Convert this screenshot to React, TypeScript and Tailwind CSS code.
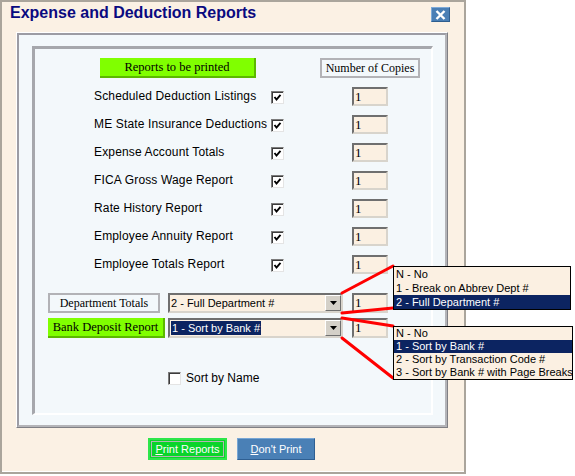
import React from 'react'

const reports = [
  'Scheduled Deduction Listings',
  'ME State Insurance Deductions',
  'Expense Account Totals',
  'FICA Gross Wage Report',
  'Rate History Report',
  'Employee Annuity Report',
  'Employee Totals Report',
]

function Check({ checked }: { checked?: boolean }) {
  return (
    <div className="w-[13px] h-[13px] shrink-0 bg-white border border-t-[#7b7b7b] border-l-[#7b7b7b] border-r-[#e4e4e4] border-b-[#e4e4e4] shadow-[inset_1px_1px_0_#3c3c3c] flex items-center justify-center">
      {checked && (
        <svg width="9" height="9" viewBox="0 0 9 9">
          <path d="M1.5 4 L3.5 6.5 L7.5 1.8" fill="none" stroke="#000" strokeWidth="1.9" />
        </svg>
      )}
    </div>
  )
}

function Copies({ className }: { className: string }) {
  return (
    <div className={`w-[36px] shrink-0 bg-[#fbf0e2] border-2 border-t-[#6f6f6f] border-l-[#6f6f6f] border-r-[#d8d4cc] border-b-[#d8d4cc] pl-[1px] font-['Liberation_Serif','Times_New_Roman',serif] text-[13px] leading-[15px] text-black ${className}`}>
      1
    </div>
  )
}

function Select({ children }: { children: React.ReactNode }) {
  return (
    <div className="w-[175px] h-[20px] shrink-0 flex items-center bg-[#fbf0e2] border-2 border-t-[#6f6f6f] border-l-[#6f6f6f] border-r-[#d8d4cc] border-b-[#d8d4cc] pl-[1px] text-[11px] text-black">
      <div className="flex-1 flex items-center">{children}</div>
      <div className="w-[16px] h-[16px] bg-[#d4d0c8] border border-t-white border-l-white border-r-[#6f6f6f] border-b-[#6f6f6f] flex items-center justify-center">
        <svg width="7" height="4" viewBox="0 0 7 4">
          <polygon points="0,0 7,0 3.5,4" fill="#000" />
        </svg>
      </div>
    </div>
  )
}

export default function App() {
  return (
    <div className="relative w-[575px] h-[476px] bg-white overflow-hidden font-['Liberation_Sans',Arial,sans-serif]">
      {/* dialog window */}
      <div className="w-[466px] h-[474px] bg-[#fbf1e4] border-2 border-[#aaa59c] shadow-[inset_0_-1px_0_#fff]">
        <div className="h-[30px] flex items-start">
          <div className="pl-[8px] pt-[2px] text-[16px] leading-[18px] font-bold text-[#0a0a80]">
            Expense and Deduction Reports
          </div>
          <button className="ml-auto mt-[5px] mr-[14px] w-[19px] h-[15px] bg-[#4a7fb5] border border-t-[#7eaad8] border-l-[#7eaad8] border-r-[#2d5d8e] border-b-[#2d5d8e] flex items-center justify-center">
            <svg width="11" height="10" viewBox="0 0 11 10">
              <path d="M1.5 1 L9.5 9 M9.5 1 L1.5 9" stroke="#fff" strokeWidth="2.4" />
            </svg>
          </button>
        </div>

        {/* outer group */}
        <div className="ml-[14px] w-[432px] h-[396px] border border-t-white border-l-white border-r-[#7f7f84] border-b-[#7f7f84]">
          <div className="h-full border-2 border-t-[#9c9ca4] border-l-[#9c9ca4] border-r-[#b4b4b8] border-b-[#b4b4b8] bg-[#f3f8fb] pt-[11px] pl-[13px]">
            {/* inner group */}
            <div className="w-[401px] h-[369px] border-t-[3px] border-l-[3px] border-r-2 border-b-2 border-t-[#a6a7ac] border-l-[#a6a7ac] border-r-white border-b-white">
              <div className="pt-[9px] flex">
                <div className="ml-[65px] w-[156px] h-[20px] bg-[#80ff00] border-r-2 border-b-2 border-[#5cb800] flex items-center justify-center font-['Liberation_Serif','Times_New_Roman',serif] text-[12.5px] text-black">
                  Reports to be printed
                </div>
                <div className="ml-[64px] w-[100px] h-[20px] border-2 border-[#b2b2b6] flex items-center justify-center font-['Liberation_Serif','Times_New_Roman',serif] text-[12px] text-black">
                  Number of Copies
                </div>
              </div>

              <div className="mt-[4px]">
                {reports.map((r) => (
                  <div key={r} className="h-[28px] flex items-center pl-[59px]">
                    <div className="w-[177px] text-[12px] tracking-[0.15px] text-black">{r}</div>
                    <div className="mt-[2px]">
                      <Check checked />
                    </div>
                    <div className="ml-[68px]">
                      <Copies className="h-[19px]" />
                    </div>
                  </div>
                ))}
              </div>

              <div className="mt-[15px] h-[20px] flex pl-[13px]">
                <div className="w-[112px] h-[20px] border-2 border-[#b2b2b6] flex items-center justify-center font-['Liberation_Serif','Times_New_Roman',serif] text-[12px] text-black">
                  Department Totals
                </div>
                <div className="ml-[8px]">
                  <Select>2 - Full Department #</Select>
                </div>
                <div className="ml-[9px]">
                  <Copies className="h-[20px]" />
                </div>
              </div>

              <div className="mt-[5px] h-[20px] flex pl-[13px]">
                <div className="w-[117px] h-[20px] bg-[#80ff00] border-r-2 border-b-2 border-[#5cb800] flex items-center justify-center font-['Liberation_Serif','Times_New_Roman',serif] text-[12.5px] text-black">
                  Bank Deposit Report
                </div>
                <div className="ml-[3px]">
                  <Select>
                    <span className="bg-[#0c2461] text-white px-[1px] leading-[14px]">1 - Sort by Bank #</span>
                  </Select>
                </div>
                <div className="ml-[9px]">
                  <Copies className="h-[20px]" />
                </div>
              </div>

              <div className="mt-[28px] h-[24px] flex items-center pl-[133px]">
                <Check />
                <span className="ml-[5px] text-[12px] text-black">Sort by Name</span>
              </div>
            </div>
          </div>
        </div>

        <div className="mt-[10px] flex pl-[146px] gap-[10px]">
          <button className="w-[79px] h-[22px] bg-[#0ad42a] border-2 border-[#2ee64a] p-[1px]">
            <div className="w-full h-full border border-[#b4b4b4] flex items-center justify-center text-[11px] text-white">
              <span><u>P</u>rint Reports</span>
            </div>
          </button>
          <button className="w-[78px] h-[22px] bg-[#4a80b6] border border-t-[#78a6d4] border-l-[#78a6d4] border-r-[#2f5f92] border-b-[#2f5f92] flex items-center justify-center text-[11px] text-white">
            <span><u>D</u>on't Print</span>
          </button>
        </div>
      </div>

      {/* callout lines */}
      <svg className="absolute left-0 top-0 pointer-events-none" width="575" height="476">
        <g stroke="#ff0000" strokeWidth="3" strokeLinecap="round">
          <line x1="342" y1="293" x2="393" y2="266" />
          <line x1="342" y1="313" x2="393" y2="308" />
          <line x1="342" y1="318" x2="393" y2="326" />
          <line x1="342" y1="338" x2="393" y2="378" />
        </g>
      </svg>

      {/* dropdown lists */}
      <div className="absolute left-[393px] top-[266px] w-[178px] border border-black bg-[#fbf0e2] text-[11px] leading-[14px] text-black">
        <div className="h-[14px] px-[2px]">N - No</div>
        <div className="h-[14px] px-[2px]">1 - Break on Abbrev Dept #</div>
        <div className="h-[14px] px-[2px] bg-[#0c2461] text-white">2 - Full Department #</div>
      </div>
      <div className="absolute left-[393px] top-[326px] w-[180px] border border-black bg-[#fbf0e2] text-[11px] leading-[13px] text-black">
        <div className="h-[13px] px-[2px]">N - No</div>
        <div className="h-[13px] px-[2px] bg-[#0c2461] text-white">1 - Sort by Bank #</div>
        <div className="h-[13px] px-[2px]">2 - Sort by Transaction Code #</div>
        <div className="h-[13px] px-[2px] whitespace-nowrap">3 - Sort by Bank # with Page Breaks</div>
      </div>
    </div>
  )
}
